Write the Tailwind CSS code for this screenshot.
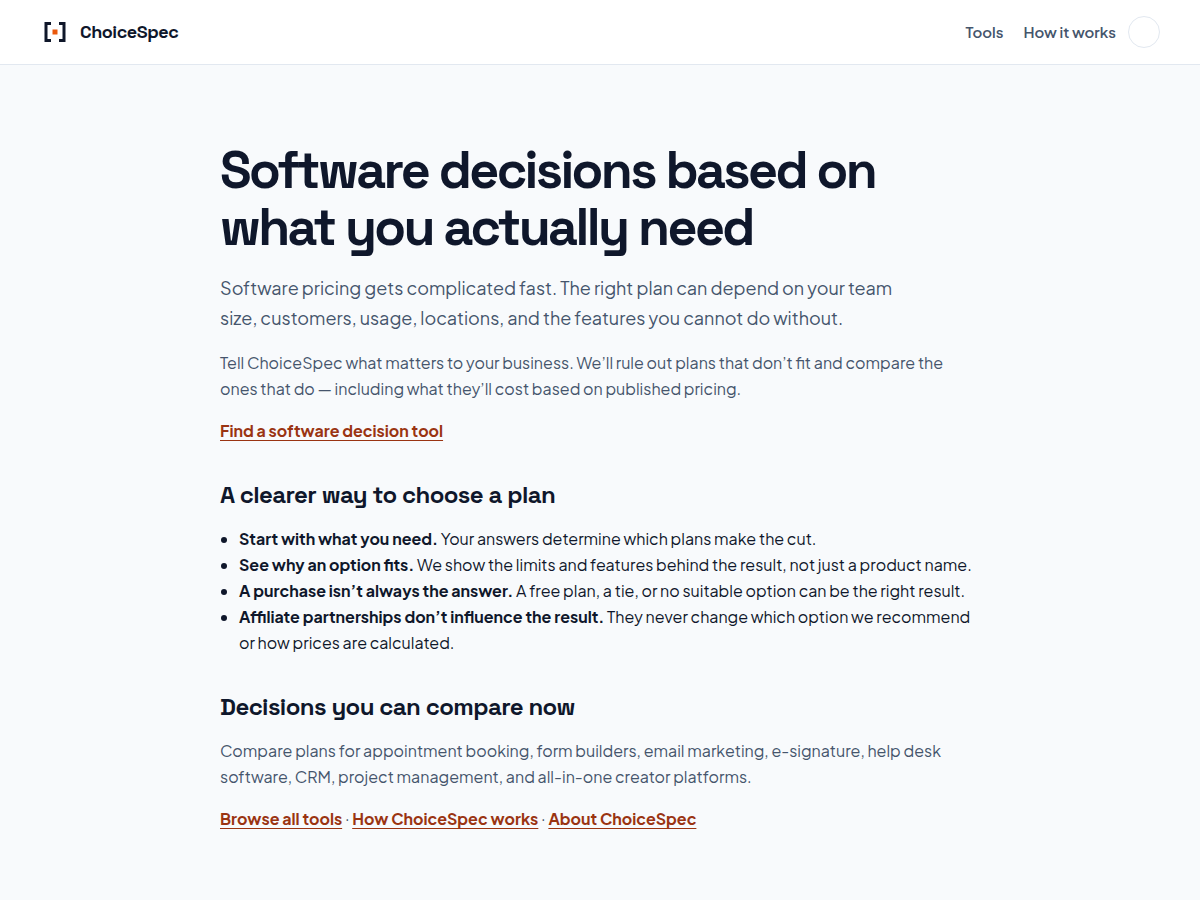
<!DOCTYPE html>
<html lang="en">
<head>
    <meta charset="UTF-8">
    <meta name="viewport" content="width=device-width, initial-scale=1.0">
    <title>ChoiceSpec</title>
    <script src="https://cdn.jsdelivr.net/npm/@tailwindcss/browser@4"></script>
</head>
<body class="min-h-screen bg-slate-50 font-['Plus_Jakarta_Sans',Inter,sans-serif] text-[16px] leading-[26px] text-slate-900">
    <header class="flex h-[65px] items-center justify-between border-b border-slate-200 bg-white px-10">
        <a href="#" class="flex items-center gap-2.5 font-['Space_Grotesk',Inter,sans-serif] text-[18px] font-semibold tracking-tight">
            <svg class="size-[30px]" viewBox="0 0 30 30" fill="none" aria-hidden="true">
                <path d="M11 6.500H6V23.500H11M19 6.500H24V23.500H19" stroke="#0f172a" stroke-width="3"/>
                <rect x="12.500" y="12.500" width="5" height="5" fill="#ea580c"/>
            </svg>
            ChoiceSpec
        </a>
        <nav class="flex items-center text-[15px] font-semibold text-slate-600">
            <a href="#" class="mr-5">Tools</a>
            <a href="#" class="mr-3">How it works</a>
            <button type="button" aria-label="Toggle theme" class="size-8 rounded-full border border-slate-200"></button>
        </nav>
    </header>

    <main class="mx-auto max-w-[760px] pt-[77px] pb-16">
        <h1 class="font-['Space_Grotesk',Inter,sans-serif] text-[52px] leading-[57px] font-bold tracking-tighter">Software decisions based on what you actually need</h1>
        <p class="mt-[17px] max-w-[700px] text-[18px] leading-[30px] text-slate-600">Software pricing gets complicated fast. The right plan can depend on your team size, customers, usage, locations, and the features you cannot do without.</p>
        <p class="mt-[17px] text-slate-600">Tell ChoiceSpec what matters to your business. We’ll rule out plans that don’t fit and compare the ones that do — including what they’ll cost based on published pricing.</p>
        <p class="mt-4"><a href="#" class="font-bold text-[#9a3412] underline underline-offset-[3px] [text-decoration-skip-ink:none]">Find a software decision tool</a></p>

        <h2 class="mt-9 font-['Space_Grotesk',Inter,sans-serif] text-[24px] leading-[30px] font-semibold tracking-tight">A clearer way to choose a plan</h2>
        <ul class="mt-4 list-disc pl-[19px]">
            <li><strong>Start with what you need.</strong> Your answers determine which plans make the cut.</li>
            <li><strong>See why an option fits.</strong> We show the limits and features behind the result, not just a product name.</li>
            <li><strong>A purchase isn’t always the answer.</strong> A free plan, a tie, or no suitable option can be the right result.</li>
            <li><strong>Affiliate partnerships don’t influence the result.</strong> They never change which option we recommend or how prices are calculated.</li>
        </ul>

        <h2 class="mt-9 font-['Space_Grotesk',Inter,sans-serif] text-[24px] leading-[30px] font-semibold tracking-tight">Decisions you can compare now</h2>
        <p class="mt-4 text-slate-600">Compare plans for appointment booking, form builders, email marketing, e-signature, help desk software, CRM, project management, and all-in-one creator platforms.</p>
        <p class="mt-4 text-slate-600">
            <a href="#" class="font-bold text-[#9a3412] underline underline-offset-[3px] [text-decoration-skip-ink:none]">Browse all tools</a> ·
            <a href="#" class="font-bold text-[#9a3412] underline underline-offset-[3px] [text-decoration-skip-ink:none]">How ChoiceSpec works</a> ·
            <a href="#" class="font-bold text-[#9a3412] underline underline-offset-[3px] [text-decoration-skip-ink:none]">About ChoiceSpec</a>
        </p>
    </main>
</body>
</html>
